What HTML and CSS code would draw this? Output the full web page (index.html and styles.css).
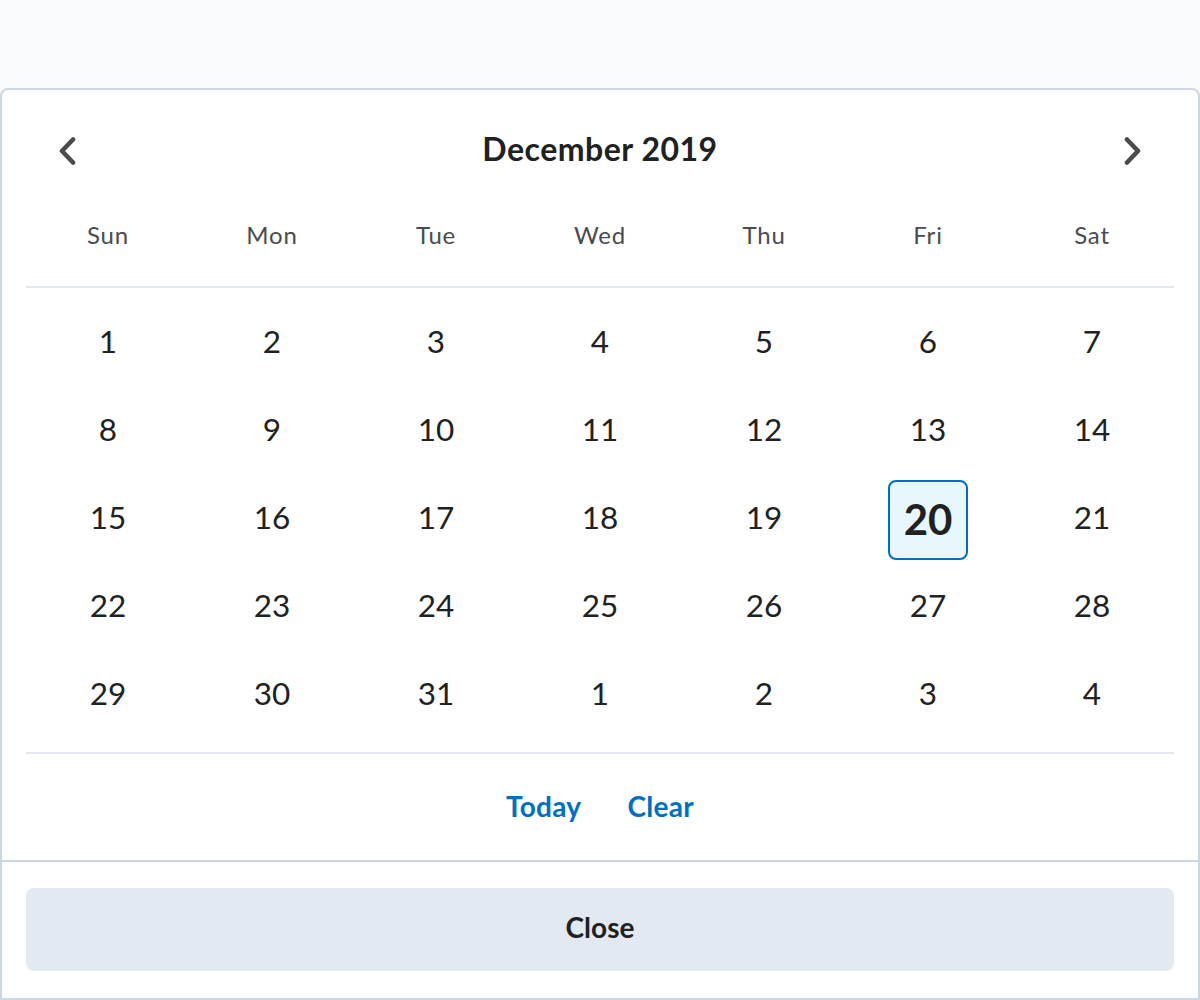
FILE: index.html
```html
<!DOCTYPE html>
<html lang="en">
<head>
<meta charset="utf-8">
<title>Date picker</title>
<link rel="stylesheet" href="styles.css">
</head>
<body>
<div class="panel">
  <div class="picker">
    <div class="header">
      <button class="nav" aria-label="Previous month">
        <svg width="18" height="30" viewBox="0 0 18 30"><path d="M15 3.5 L4 15 L15 26.5" fill="none" stroke="#494c4e" stroke-width="4.6" stroke-linecap="round" stroke-linejoin="round"/></svg>
      </button>
      <div class="title">December 2019</div>
      <button class="nav" aria-label="Next month">
        <svg width="18" height="30" viewBox="0 0 18 30"><path d="M3 3.5 L14 15 L3 26.5" fill="none" stroke="#494c4e" stroke-width="4.6" stroke-linecap="round" stroke-linejoin="round"/></svg>
      </button>
    </div>
    <div class="weekdays">
      <div>Sun</div><div>Mon</div><div>Tue</div><div>Wed</div><div>Thu</div><div>Fri</div><div>Sat</div>
    </div>
    <div class="days">
      <div class="day">1</div><div class="day">2</div><div class="day">3</div><div class="day">4</div><div class="day">5</div><div class="day">6</div><div class="day">7</div>
      <div class="day">8</div><div class="day">9</div><div class="day">10</div><div class="day">11</div><div class="day">12</div><div class="day">13</div><div class="day">14</div>
      <div class="day">15</div><div class="day">16</div><div class="day">17</div><div class="day">18</div><div class="day">19</div><div class="day"><span class="selected">20</span></div><div class="day">21</div>
      <div class="day">22</div><div class="day">23</div><div class="day">24</div><div class="day">25</div><div class="day">26</div><div class="day">27</div><div class="day">28</div>
      <div class="day">29</div><div class="day">30</div><div class="day">31</div><div class="day">1</div><div class="day">2</div><div class="day">3</div><div class="day">4</div>
    </div>
    <div class="actions">
      <a class="link">Today</a>
      <a class="link">Clear</a>
    </div>
  </div>
  <div class="footer">
    <button class="close">Close</button>
  </div>
</div>
</body>
</html>
```

FILE: styles.css
```css
html, body {
  margin: 0;
  padding: 0;
}
body {
  background: #f9fbfe;
  font-family: Lato, "Open Sans", "Liberation Sans", sans-serif;
  color: #202122;
  height: 1000px;
  overflow: hidden;
}
.panel {
  margin-top: 88px;
  background: #ffffff;
  border: 2px solid #cdd7e1;
  border-radius: 8px 8px 0 0;
  height: 912px;
  box-sizing: border-box;
}
.picker {
  padding: 0 24px;
}
.header {
  display: flex;
  align-items: center;
  justify-content: space-between;
  height: 70px;
  padding: 26px 32px 0;
}
.nav {
  background: none;
  border: none;
  padding: 0;
  width: 18px;
  height: 30px;
  display: flex;
}
.title {
  font-size: 32px;
  line-height: 40px;
  font-weight: 700;
  letter-spacing: 0.5px;
  color: #202122;
  padding-bottom: 5px;
}
.weekdays {
  display: grid;
  grid-template-columns: repeat(7, 1fr);
  height: 100px;
  align-items: center;
  border-bottom: 2px solid #e3e9f1;
  font-size: 24px;
  line-height: 30px;
  color: #494c4e;
  text-align: center;
  letter-spacing: 0.8px;
}
.weekdays div {
  padding-bottom: 2px;
}
.days {
  display: grid;
  grid-template-columns: repeat(7, 1fr);
  grid-auto-rows: 88px;
  padding: 10px 0 14px;
  border-bottom: 2px solid #e3e9f1;
}
.day {
  display: flex;
  align-items: center;
  justify-content: center;
  font-size: 31.5px;
  line-height: 38px;
  color: #202122;
  padding-bottom: 2px;
}
.selected {
  width: 80px;
  height: 80px;
  box-sizing: border-box;
  border: 2px solid #006fbf;
  border-radius: 8px;
  background: #e8f7fd;
  display: flex;
  align-items: center;
  justify-content: center;
  font-size: 42px;
  line-height: 50px;
  font-weight: 700;
  padding-bottom: 2px;
  margin-top: 5px;
}
.actions {
  display: flex;
  justify-content: center;
  align-items: center;
  gap: 46px;
  height: 106px;
}
.link {
  color: #006fbf;
  font-size: 28px;
  line-height: 34px;
  font-weight: 700;
  letter-spacing: 0.3px;
  padding-bottom: 2px;
}
.footer {
  border-top: 2px solid #cdd7e1;
  padding: 26px 24px;
}
.close {
  display: block;
  width: 100%;
  height: 83px;
  border: none;
  border-radius: 8px;
  background: #e3e9f1;
  font-family: Lato, "Open Sans", "Liberation Sans", sans-serif;
  font-size: 28px;
  line-height: 34px;
  font-weight: 700;
  color: #202122;
  padding: 0 0 6px;
}
```
